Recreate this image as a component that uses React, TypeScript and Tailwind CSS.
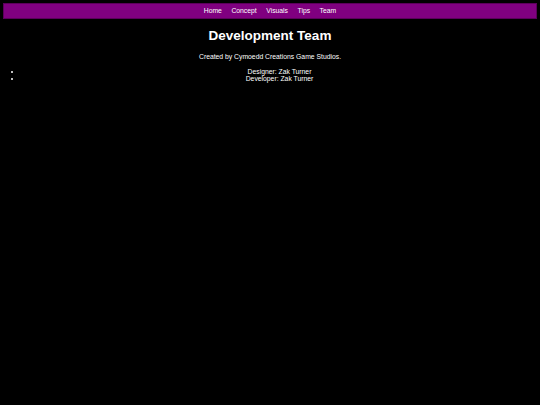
export default function App() {
  const links = ['Home', 'Concept', 'Visuals', 'Tips', 'Team'];
  return (
    <div className="min-h-screen bg-black text-white p-[3px]" style={{ fontFamily: '"Liberation Sans", Arial, sans-serif' }}>
      <nav className="h-[16px] bg-[#800080] border border-[#5a005a] flex items-center justify-center gap-[9.5px] text-[6.8px]">
        {links.map((l) => (
          <a key={l} href="#" className="text-white">{l}</a>
        ))}
      </nav>
      <h1 className="text-center font-bold text-[13.5px] leading-none mt-[10px]">Development Team</h1>
      <p className="text-center text-[6.8px] leading-[8px] mt-[10px]">Created by Cymoedd Creations Game Studios.</p>
      <ul className="list-disc pl-[19px] text-center text-[6.8px] leading-[7px] mt-[7px]">
        <li>Designer: Zak Turner</li>
        <li>Developer: Zak Turner</li>
      </ul>
    </div>
  );
}
